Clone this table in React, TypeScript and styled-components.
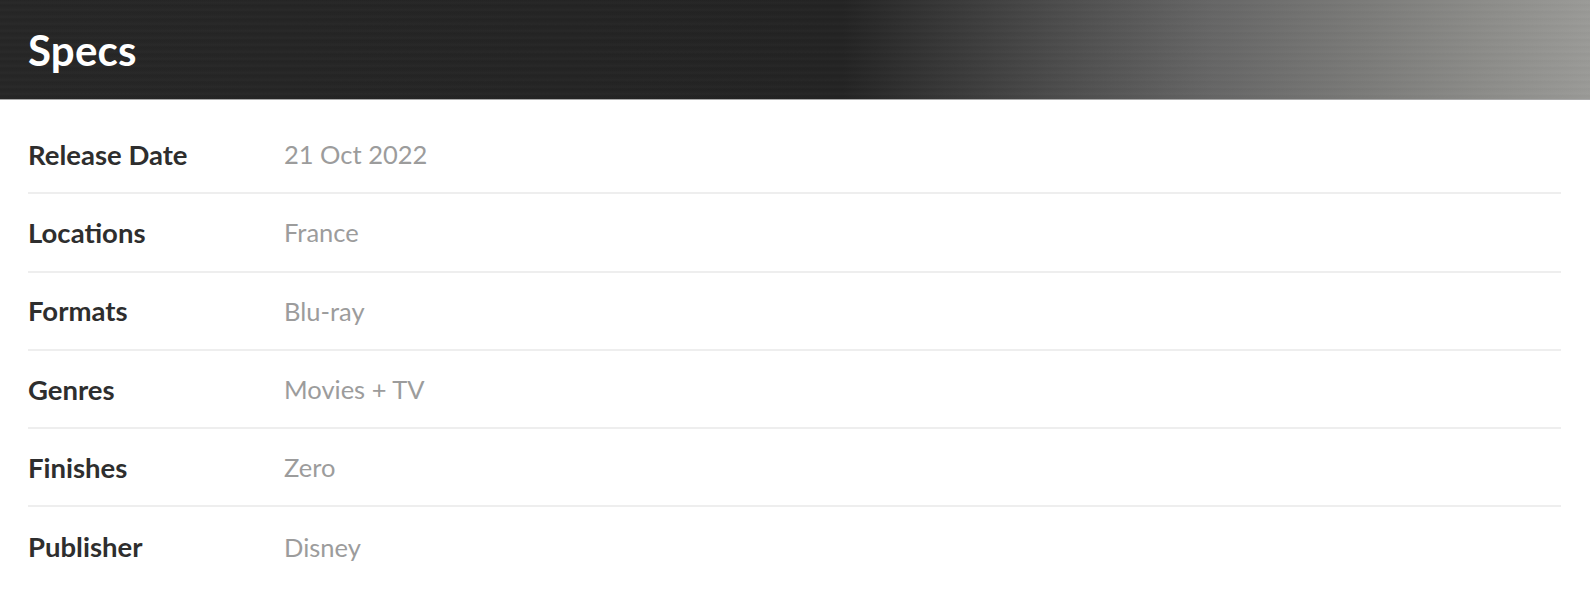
import styled, { createGlobalStyle } from 'styled-components';

const GlobalStyle = createGlobalStyle`
  html, body {
    margin: 0;
    padding: 0;
    background: #ffffff;
  }
  body {
    font-family: Lato, "Noto Sans", sans-serif;
    -webkit-font-smoothing: antialiased;
  }
`;

interface Spec {
  label: string;
  value: string;
}

const specs: Spec[] = [
  { label: 'Release Date', value: '21 Oct 2022' },
  { label: 'Locations', value: 'France' },
  { label: 'Formats', value: 'Blu-ray' },
  { label: 'Genres', value: 'Movies + TV' },
  { label: 'Finishes', value: 'Zero' },
  { label: 'Publisher', value: 'Disney' },
];

const Panel = styled.section`
  width: 100%;
`;

// brushed metal header: flat dark on the left, fading to grey with faint streaks
const Header = styled.header`
  height: 100px;
  display: flex;
  align-items: center;
  padding: 0 28px;
  box-sizing: border-box;
  border-bottom: 1px solid #a8a8a8;
  background:
    repeating-linear-gradient(
      180deg,
      rgba(255, 255, 255, 0) 0px,
      rgba(255, 255, 255, 0.018) 3px,
      rgba(0, 0, 0, 0.018) 5px,
      rgba(255, 255, 255, 0) 7px
    ),
    linear-gradient(
      90deg,
      #262626 0%,
      #232323 53%,
      #333333 58%,
      #4a4a4a 66%,
      #656565 76%,
      #7b7b79 86%,
      #8b8b88 93%,
      #9a9a97 100%
    );
`;

const Title = styled.h2`
  margin: 0;
  color: #ffffff;
  font-size: 42px;
  font-weight: 700;
  letter-spacing: 0.2px;
`;

const List = styled.dl`
  margin: 0;
  padding: 16px 29px 0 28px;
`;

const Row = styled.div<{ $last?: boolean }>`
  display: grid;
  grid-template-columns: 255px 1fr;
  align-items: center;
  height: 78.3px;
  box-sizing: border-box;
  border-bottom: ${p => (p.$last ? 'none' : '2px solid #eeeeee')};
`;

const Label = styled.dt`
  margin: 0;
  color: #2e2e2e;
  font-size: 27.5px;
  font-weight: 700;
`;

const Value = styled.dd`
  margin: 0 0 0 1px;
  color: #9c9c9c;
  font-size: 25.5px;
  font-weight: 400;
`;

const App = () => {
  return (
    <Panel>
      <GlobalStyle />
      <Header>
        <Title>Specs</Title>
      </Header>
      <List>
        {specs.map((s, i) => (
          <Row key={s.label} $last={i === specs.length - 1}>
            <Label>{s.label}</Label>
            <Value>{s.value}</Value>
          </Row>
        ))}
      </List>
    </Panel>
  );
};

export default App;
